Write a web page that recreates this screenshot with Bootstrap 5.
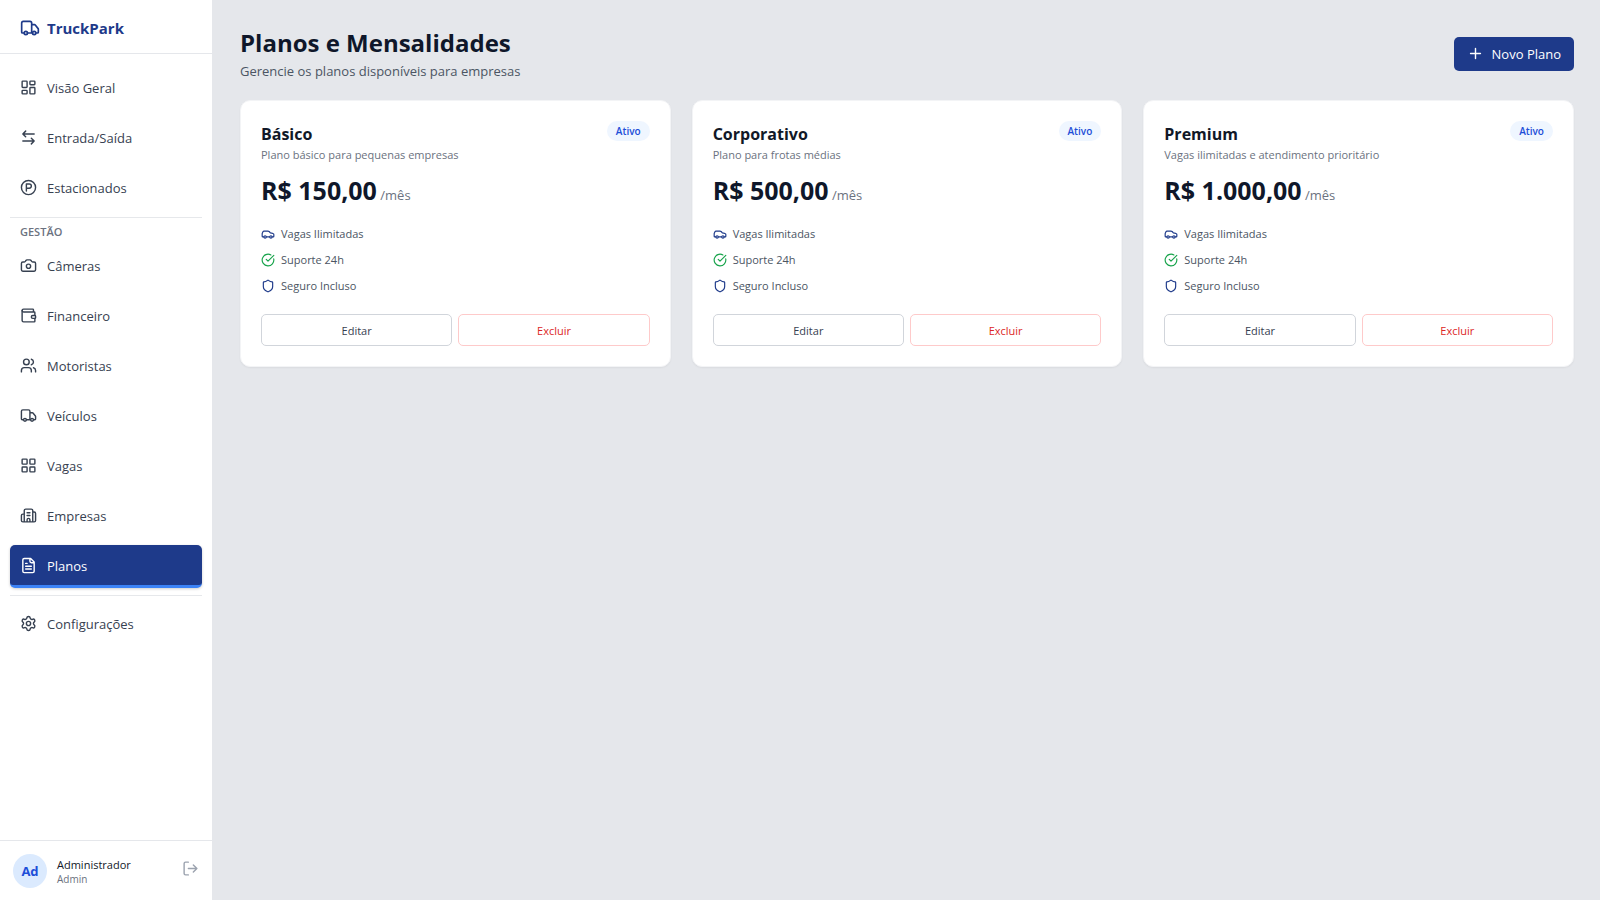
<!DOCTYPE html>
<html lang="pt-BR">
<head>
<meta charset="utf-8">
<meta name="viewport" content="width=device-width, initial-scale=1">
<title>TruckPark</title>
<link href="https://cdn.jsdelivr.net/npm/bootstrap@5.3.0/dist/css/bootstrap.min.css" rel="stylesheet">
<style>
  body { font-family: "Open Sans", "Noto Sans", sans-serif; font-size: 13px; line-height: 20px; background: #e5e7eb; color: #111827; }
  svg { fill: none; stroke: currentColor; stroke-width: 2; stroke-linecap: round; stroke-linejoin: round; flex: none; }
  .ic { width: 17px; height: 17px; }
  .ic-logo { width: 20px; height: 20px; }
  .ic-sm { width: 14px; height: 14px; }
  .sidebar { width: 213px; background: #fff; border-right: 1px solid #e5e7eb; }
  .brand { height: 54px; padding: 2px 20px 0; gap: 7px; border-bottom: 1px solid #e5e7eb; font-size: 15px; font-weight: 700; color: #1e3a8a; }
  .menu { padding: 13px 10px; gap: 7px; }
  .menu a { height: 43px; padding: 1px 10px 0; gap: 10px; border-radius: 5px; color: #374151; border-bottom: 3px solid transparent; }
  .menu a:hover { background: #f3f4f6; }
  .menu a.active { background: #1e3a8a; color: #fff; border-bottom-color: #3b82f6; box-shadow: 0 1px 3px rgba(0,0,0,.2); }
  .menu hr { margin: 0; border-color: #9ca3af; }
  .menu-label { font-size: 11px; font-weight: 600; line-height: 13px; color: #6b7280; padding: 0 10px; }
  .user { height: 60px; padding: 0 13px; border-top: 1px solid #e5e7eb; }
  .avatar { width: 34px; height: 34px; background: #dbeafe; color: #1d4ed8; font-weight: 700; }
  .user-text { margin-left: 10px; padding-top: 2px; }
  .user-name { font-size: 11px; line-height: 16px; }
  .user-role { font-size: 10px; line-height: 13px; color: #6b7280; }
  .logout { color: #9ca3af; }
  .content { padding: 26px 26px 26px 27px; }
  h1 { font-size: 24px; line-height: 33px; font-weight: 700; color: #0f172a; }
  .subtitle { color: #4b5563; padding-top: 2px; }
  .btn-new { font-size: 13px; line-height: 20px; padding: 7px 13px; border: 0; border-radius: 5px; background: #1e3a8a; color: #fff; }
  .btn-new:hover { background: #1e40af; color: #fff; }
  .plans { --bs-gutter-x: 21px; --bs-gutter-y: 21px; margin-top: -2px; }
  .plan { border: 1px solid #f3f4f6; border-radius: 10px; padding: 20px; box-shadow: 0 1px 2px rgba(0,0,0,.05); }
  .plan h2 { font-size: 16px; line-height: 26px; font-weight: 700; color: #111827; }
  .plan-text { font-size: 11px; line-height: 15px; color: #6b7280; }
  .status { font-size: 10px; line-height: 14px; font-weight: 600; color: #1d4ed8; background: #eff6ff; padding: 3px 9px; }
  .price { margin-top: 12px; line-height: 33px; color: #6b7280; }
  .price strong { font-size: 25px; color: #0f172a; }
  .features { margin: 13px 0 20px; gap: 9px; font-size: 11px; line-height: 17px; color: #4b5563; }
  .features li { gap: 6px; }
  .navy { color: #1e3a8a; }
  .green { color: #16a34a; }
  .actions { gap: 6px; }
  .btn-plan { font-size: 11px; line-height: 16px; padding: 8px 12px 6px; border-radius: 5px; border: 1px solid #d1d5db; color: #374151; }
  .btn-plan.danger { border-color: #fecaca; color: #dc2626; }
</style>
</head>
<body>
<svg class="d-none" xmlns="http://www.w3.org/2000/svg">
  <symbol id="truck" viewBox="0 0 24 24"><path d="M14 18V6a2 2 0 0 0-2-2H4a2 2 0 0 0-2 2v11a1 1 0 0 0 1 1h2M15 18H9M19 18h2a1 1 0 0 0 1-1v-3.65a1 1 0 0 0-.22-.624l-3.48-4.35A1 1 0 0 0 17.52 8H14"/><circle cx="17" cy="18" r="2"/><circle cx="7" cy="18" r="2"/></symbol>
  <symbol id="car" viewBox="0 0 24 24"><path d="M19 17h2c.6 0 1-.4 1-1v-3c0-.9-.7-1.7-1.5-1.9C18.700 10.600 16 10 16 10s-1.300-1.400-2.200-2.300c-.5-.4-1.100-.7-1.800-.7H5c-.6 0-1.100.4-1.400.9l-1.400 2.900A3.700 3.700 0 0 0 2 12v4c0 .6.4 1 1 1h2M9 17h6"/><circle cx="7" cy="17" r="2"/><circle cx="17" cy="17" r="2"/></symbol>
  <symbol id="check" viewBox="0 0 24 24"><path d="M21.801 10A10 10 0 1 1 17 3.335M9 11l3 3L22 4"/></symbol>
  <symbol id="shield" viewBox="0 0 24 24"><path d="M20 13c0 5-3.500 7.500-7.660 8.950a1 1 0 0 1-.67-.01C7.500 20.500 4 18 4 13V6a1 1 0 0 1 1-1c2 0 4.500-1.200 6.240-2.720a1.170 1.170 0 0 1 1.520 0C14.510 3.810 17 5 19 5a1 1 0 0 1 1 1z"/></symbol>
</svg>
<div class="d-flex min-vh-100">
  <aside class="sidebar d-flex flex-column flex-shrink-0">
    <div class="brand d-flex align-items-center"><svg class="ic-logo"><use href="#truck"/></svg>TruckPark</div>
    <nav class="menu nav flex-column flex-nowrap flex-grow-1" aria-label="Principal">
      <a href="#" class="d-flex align-items-center text-decoration-none"><svg class="ic" viewBox="0 0 24 24"><rect x="3" y="3" width="7" height="9" rx="1"/><rect x="14" y="3" width="7" height="5" rx="1"/><rect x="14" y="12" width="7" height="9" rx="1"/><rect x="3" y="16" width="7" height="5" rx="1"/></svg>Visão Geral</a>
      <a href="#" class="d-flex align-items-center text-decoration-none"><svg class="ic" viewBox="0 0 24 24"><path d="M8 3 4 7l4 4M4 7h16M16 21l4-4-4-4M20 17H4"/></svg>Entrada/Saída</a>
      <a href="#" class="d-flex align-items-center text-decoration-none"><svg class="ic" viewBox="0 0 24 24"><circle cx="12" cy="12" r="10"/><path d="M9 17V7h4a3 3 0 0 1 0 6H9"/></svg>Estacionados</a>
      <hr>
      <div class="menu-label">GESTÃO</div>
      <a href="#" class="d-flex align-items-center text-decoration-none"><svg class="ic" viewBox="0 0 24 24"><path d="M13.997 4a2 2 0 0 1 1.760 1.050l.486.9A2 2 0 0 0 18.003 7H20a2 2 0 0 1 2 2v9a2 2 0 0 1-2 2H4a2 2 0 0 1-2-2V9a2 2 0 0 1 2-2h1.997a2 2 0 0 0 1.759-1.048l.489-.904A2 2 0 0 1 10.004 4z"/><circle cx="12" cy="13" r="3"/></svg>Câmeras</a>
      <a href="#" class="d-flex align-items-center text-decoration-none"><svg class="ic" viewBox="0 0 24 24"><path d="M19 7V4a1 1 0 0 0-1-1H5a2 2 0 0 0 0 4h15a1 1 0 0 1 1 1v4h-3a2 2 0 0 0 0 4h3a1 1 0 0 0 1-1v-2a1 1 0 0 0-1-1"/><path d="M3 5v14a2 2 0 0 0 2 2h15a1 1 0 0 0 1-1v-4"/></svg>Financeiro</a>
      <a href="#" class="d-flex align-items-center text-decoration-none"><svg class="ic" viewBox="0 0 24 24"><path d="M16 21v-2a4 4 0 0 0-4-4H6a4 4 0 0 0-4 4v2M16 3.128a4 4 0 0 1 0 7.744M22 21v-2a4 4 0 0 0-3-3.870"/><circle cx="9" cy="7" r="4"/></svg>Motoristas</a>
      <a href="#" class="d-flex align-items-center text-decoration-none"><svg class="ic"><use href="#truck"/></svg>Veículos</a>
      <a href="#" class="d-flex align-items-center text-decoration-none"><svg class="ic" viewBox="0 0 24 24"><rect x="3" y="3" width="7" height="7" rx="1"/><rect x="14" y="3" width="7" height="7" rx="1"/><rect x="14" y="14" width="7" height="7" rx="1"/><rect x="3" y="14" width="7" height="7" rx="1"/></svg>Vagas</a>
      <a href="#" class="d-flex align-items-center text-decoration-none"><svg class="ic" viewBox="0 0 24 24"><path d="M10 12h4M10 8h4M14 21v-3a2 2 0 0 0-4 0v3M6 10H4a2 2 0 0 0-2 2v7a2 2 0 0 0 2 2h16a2 2 0 0 0 2-2V9a2 2 0 0 0-2-2h-2M6 21V5a2 2 0 0 1 2-2h8a2 2 0 0 1 2 2v16"/></svg>Empresas</a>
      <a href="#" class="active d-flex align-items-center text-decoration-none" aria-current="page"><svg class="ic" viewBox="0 0 24 24"><path d="M15 2H6a2 2 0 0 0-2 2v16a2 2 0 0 0 2 2h12a2 2 0 0 0 2-2V7ZM14 2v4a2 2 0 0 0 2 2h4M10 9H8M16 13H8M16 17H8"/></svg>Planos</a>
      <hr>
      <a href="#" class="d-flex align-items-center text-decoration-none"><svg class="ic" viewBox="0 0 24 24"><path d="M9.671 4.136a2.340 2.340 0 0 1 4.659 0 2.340 2.340 0 0 0 3.319 1.915 2.340 2.340 0 0 1 2.330 4.033 2.340 2.340 0 0 0 0 3.831 2.340 2.340 0 0 1-2.330 4.033 2.340 2.340 0 0 0-3.319 1.915 2.340 2.340 0 0 1-4.659 0 2.340 2.340 0 0 0-3.320-1.915 2.340 2.340 0 0 1-2.330-4.033 2.340 2.340 0 0 0 0-3.831A2.340 2.340 0 0 1 6.350 6.051a2.340 2.340 0 0 0 3.319-1.915"/><circle cx="12" cy="12" r="3"/></svg>Configurações</a>
    </nav>
    <div class="user d-flex align-items-center">
      <div class="avatar rounded-circle d-flex align-items-center justify-content-center">Ad</div>
      <div class="user-text flex-grow-1"><div class="user-name">Administrador</div><div class="user-role">Admin</div></div>
      <button type="button" class="logout btn p-0 pb-1 border-0 d-flex" aria-label="Sair"><svg class="ic" viewBox="0 0 24 24"><path d="m16 17 5-5-5-5M21 12H9M9 21H5a2 2 0 0 1-2-2V5a2 2 0 0 1 2-2h4"/></svg></button>
    </div>
  </aside>
  <main class="content flex-grow-1">
    <header class="d-flex justify-content-between align-items-center">
      <div><h1 class="mb-0">Planos e Mensalidades</h1><p class="subtitle mb-0">Gerencie os planos disponíveis para empresas</p></div>
      <button type="button" class="btn btn-new d-flex align-items-center gap-2"><svg class="ic" viewBox="0 0 24 24"><path d="M5 12h14M12 5v14"/></svg>Novo Plano</button>
    </header>
    <div class="row row-cols-1 row-cols-lg-3 plans">
      <div class="col">
        <article class="card plan">
          <div class="d-flex justify-content-between align-items-start"><div><h2 class="mb-0">Básico</h2><p class="plan-text mb-0">Plano básico para pequenas empresas</p></div><span class="status rounded-pill">Ativo</span></div>
          <div class="price"><strong>R$ 150,00</strong> /mês</div>
          <ul class="features list-unstyled d-flex flex-column">
            <li class="d-flex align-items-center"><svg class="ic-sm navy"><use href="#car"/></svg>Vagas Ilimitadas</li>
            <li class="d-flex align-items-center"><svg class="ic-sm green"><use href="#check"/></svg>Suporte 24h</li>
            <li class="d-flex align-items-center"><svg class="ic-sm navy"><use href="#shield"/></svg>Seguro Incluso</li>
          </ul>
          <div class="actions d-flex"><button type="button" class="btn btn-plan w-100">Editar</button><button type="button" class="btn btn-plan danger w-100">Excluir</button></div>
        </article>
      </div>
      <div class="col">
        <article class="card plan">
          <div class="d-flex justify-content-between align-items-start"><div><h2 class="mb-0">Corporativo</h2><p class="plan-text mb-0">Plano para frotas médias</p></div><span class="status rounded-pill">Ativo</span></div>
          <div class="price"><strong>R$ 500,00</strong> /mês</div>
          <ul class="features list-unstyled d-flex flex-column">
            <li class="d-flex align-items-center"><svg class="ic-sm navy"><use href="#car"/></svg>Vagas Ilimitadas</li>
            <li class="d-flex align-items-center"><svg class="ic-sm green"><use href="#check"/></svg>Suporte 24h</li>
            <li class="d-flex align-items-center"><svg class="ic-sm navy"><use href="#shield"/></svg>Seguro Incluso</li>
          </ul>
          <div class="actions d-flex"><button type="button" class="btn btn-plan w-100">Editar</button><button type="button" class="btn btn-plan danger w-100">Excluir</button></div>
        </article>
      </div>
      <div class="col">
        <article class="card plan">
          <div class="d-flex justify-content-between align-items-start"><div><h2 class="mb-0">Premium</h2><p class="plan-text mb-0">Vagas ilimitadas e atendimento prioritário</p></div><span class="status rounded-pill">Ativo</span></div>
          <div class="price"><strong>R$ 1.000,00</strong> /mês</div>
          <ul class="features list-unstyled d-flex flex-column">
            <li class="d-flex align-items-center"><svg class="ic-sm navy"><use href="#car"/></svg>Vagas Ilimitadas</li>
            <li class="d-flex align-items-center"><svg class="ic-sm green"><use href="#check"/></svg>Suporte 24h</li>
            <li class="d-flex align-items-center"><svg class="ic-sm navy"><use href="#shield"/></svg>Seguro Incluso</li>
          </ul>
          <div class="actions d-flex"><button type="button" class="btn btn-plan w-100">Editar</button><button type="button" class="btn btn-plan danger w-100">Excluir</button></div>
        </article>
      </div>
    </div>
  </main>
</div>
<script src="https://cdn.jsdelivr.net/npm/bootstrap@5.3.0/dist/js/bootstrap.bundle.min.js"></script>
</body>
</html>
